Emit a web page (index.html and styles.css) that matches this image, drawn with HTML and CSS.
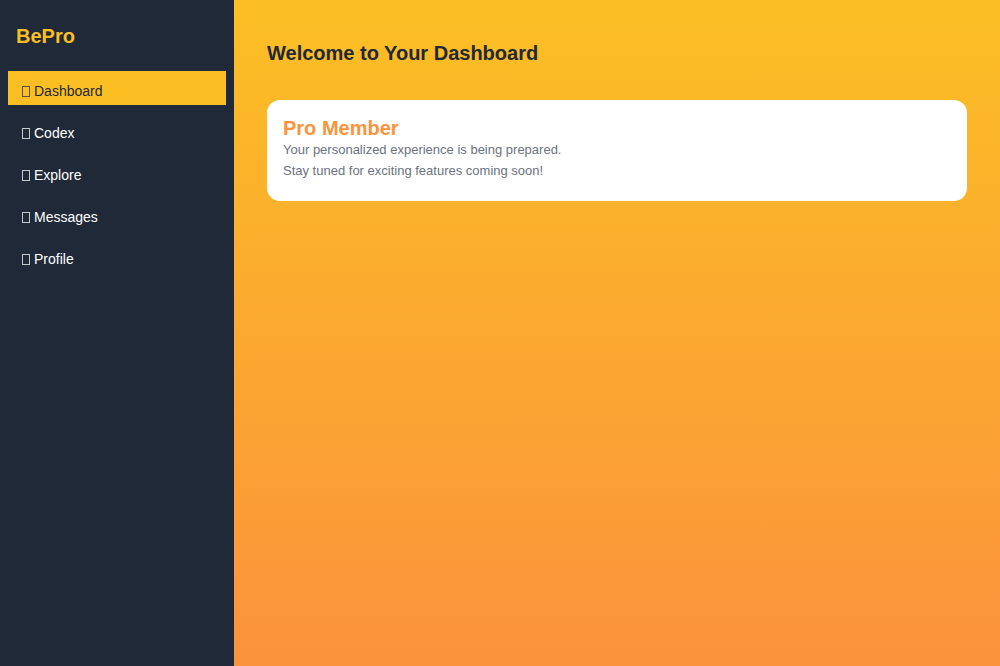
FILE: index.html
```
<!DOCTYPE html>
<html lang="en">
<head>
<meta charset="utf-8">
<title>BePro</title>
<link rel="stylesheet" href="styles.css">
</head>
<body>
<div class="app">
  <aside class="sidebar">
    <div class="brand">BePro</div>
    <nav class="nav">
      <a class="nav-link active" href="#"><span class="glyph"></span>Dashboard</a>
      <a class="nav-link" href="#"><span class="glyph"></span>Codex</a>
      <a class="nav-link" href="#"><span class="glyph"></span>Explore</a>
      <a class="nav-link" href="#"><span class="glyph"></span>Messages</a>
      <a class="nav-link" href="#"><span class="glyph"></span>Profile</a>
    </nav>
  </aside>
  <main class="main">
    <h1 class="title">Welcome to Your Dashboard</h1>
    <section class="card">
      <h2 class="card-title">Pro Member</h2>
      <p class="card-text">Your personalized experience is being prepared.</p>
      <p class="card-text">Stay tuned for exciting features coming soon!</p>
    </section>
  </main>
</div>
</body>
</html>
```
FILE: styles.css
```
* { box-sizing: border-box; }
body {
  margin: 0;
  font-family: "Liberation Sans", Arial, sans-serif;
  font-size: 13px;
}
.app { display: flex; min-height: 100vh; }
.sidebar {
  flex: 0 0 234px;
  background: #1f2937;
  padding: 24px 8px;
}
.brand {
  padding: 0 8px;
  font-size: 20px;
  line-height: 24px;
  font-weight: bold;
  color: #fbbf24;
}
.nav { display: flex; flex-direction: column; gap: 8px; margin-top: 23px; }
.nav-link {
  display: flex;
  align-items: center;
  gap: 4px;
  height: 34px;
  padding: 6px 14px 0;
  font-size: 14px;
  color: #fff;
  text-decoration: none;
}
.nav-link.active { background: #fbbf24; color: #1f2937; }
.glyph { width: 8px; height: 11px; border: 1px solid currentColor; opacity: 0.75; }
.main {
  flex: 1;
  padding: 41px 33px;
  background: linear-gradient(#fbbf24, #fb923c);
}
.title { margin: 0 0 35px; font-size: 20px; line-height: 24px; color: #1f2937; }
.card {
  padding: 17px 16px 20px;
  border-radius: 13px;
  background: #fff;
}
.card-title { margin: 0; font-size: 20px; line-height: 22px; color: #fb923c; }
.card-text { margin: 0; line-height: 21px; color: #6b7280; }
```
